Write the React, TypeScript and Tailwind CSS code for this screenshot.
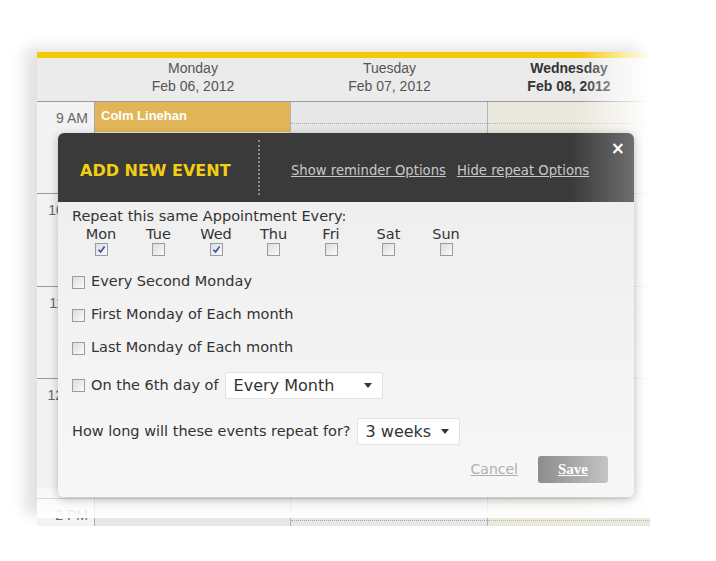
import React from "react";

const days = [
  { label: "Mon", checked: true },
  { label: "Tue", checked: false },
  { label: "Wed", checked: true },
  { label: "Thu", checked: false },
  { label: "Fri", checked: false },
  { label: "Sat", checked: false },
  { label: "Sun", checked: false },
];

const options = [
  "Every Second Monday",
  "First Monday of Each month",
  "Last Monday of Each month",
];

function Box({ checked = false }: { checked?: boolean }) {
  return (
    <div className="w-[13px] h-[13px] border border-[#9c9c9c] bg-gradient-to-br from-[#dcdcdc] to-[#fbfbfb] flex items-center justify-center shrink-0">
      {checked && (
        <svg width="9" height="9" viewBox="0 0 9 9">
          <path d="M1.5 4.8 L3.6 7 L7.6 1.6" stroke="#2f4fa8" strokeWidth="1.6" fill="none" />
        </svg>
      )}
    </div>
  );
}

function Select({ value, width }: { value: string; width: string }) {
  return (
    <div className={`${width} h-[27px] bg-white rounded-[2px] border border-[#e3e3e3] flex items-center justify-between pl-[8px] pr-[10px] shrink-0`}>
      <span className="text-[16px] text-[#333]">{value}</span>
      <svg width="8" height="5" viewBox="0 0 8 5">
        <path d="M0 0 H8 L4 5 Z" fill="#333" />
      </svg>
    </div>
  );
}

function Row({ label, h, children }: { label: string; h: string; children?: React.ReactNode }) {
  return (
    <div className={`grid grid-cols-[58px_196px_197px_162px] ${h} border-t border-[#9a9a9a]`}>
      <div className="bg-[#f3f3f3] border-r border-[#a8a8a8] text-right pr-[6px] pt-[6px] text-[14px] text-[#666]">{label}</div>
      <div className="bg-[#e7e7e7] border-r border-[#b5b5b5] relative">{children}</div>
      <div className="bg-[#e7e7e7] border-r border-[#b5b5b5]">
        <div className="h-[22px] border-b border-dotted border-[#a8a8a8]" />
      </div>
      <div className="bg-[#ebe8dd]">
        <div className="h-[22px] border-b border-dotted border-[#b8b8b8]" />
      </div>
    </div>
  );
}

export default function App() {
  return (
    <div className="w-[716px] h-[561px] bg-white relative overflow-hidden font-['Liberation_Sans',sans-serif]">
      {/* calendar */}
      <div className="absolute left-[37px] top-[52px] w-[613px] shadow-[-12px_-4px_14px_rgba(0,0,0,0.12)]">
        <div className="h-[6px] bg-[#f4c906]" />
        <div className="grid grid-cols-[58px_196px_197px_162px] h-[43px] pb-[6px] bg-[#ebebeb] text-[14px] leading-[18px] text-[#555]">
          <div />
          <div className="flex flex-col items-center justify-center">
            <span>Monday</span>
            <span>Feb 06, 2012</span>
          </div>
          <div className="flex flex-col items-center justify-center">
            <span>Tuesday</span>
            <span>Feb 07, 2012</span>
          </div>
          <div className="flex flex-col items-center justify-center font-bold text-[#333]">
            <span>Wednesday</span>
            <span>Feb 08, 2012</span>
          </div>
        </div>
        <Row label="9 AM" h="h-[92px]">
          <div className="absolute left-0 top-0 w-full h-[30px] bg-[#e2b658] text-white font-bold text-[13px] pl-[6px] pt-[4px]">
            Colm Linehan
          </div>
        </Row>
        <Row label="10 AM" h="h-[93px]" />
        <Row label="11 AM" h="h-[92px]" />
        <Row label="12 PM" h="h-[120px]" />
        <Row label="2 PM" h="h-[20px]" />
        <div className="absolute right-0 top-0 w-[70px] h-full bg-gradient-to-r from-transparent to-white" />
        <div className="absolute left-0 bottom-0 w-full h-[30px] bg-gradient-to-b from-white/40 to-white" />
      </div>

      {/* modal */}
      <div className="absolute left-[58px] top-[133px] w-[576px] h-[364px] rounded-[6px] shadow-[0_2px_10px_rgba(0,0,0,0.25)] flex flex-col font-['DejaVu_Sans',sans-serif] overflow-hidden">
        <div className="h-[69px] bg-[linear-gradient(to_right,#3a3a3a_0%,#3a3a3a_89%,#6e6e6e_100%)] flex items-center relative pt-[6px]">
          <div className="w-[200px] pl-[22px] text-[16px] font-bold text-[#f3cf10]">ADD NEW EVENT</div>
          <div className="h-[55px] mt-[-6px] border-l-2 border-dotted border-[#8a8a8a]" />
          <div className="flex gap-[11px] pl-[31px] text-[13.2px] text-[#c8c8c8] underline">
            <span>Show reminder Options</span>
            <span>Hide repeat Options</span>
          </div>
          <span className="absolute right-[9px] top-[3px] text-white font-bold text-[17px]">×</span>
        </div>
        <div className="flex-1 bg-gradient-to-b from-[#efefef] to-[#f7f7f7] pl-[14px] pt-[5px] text-[14.5px] text-[#333]">
          <div className="leading-[18px] whitespace-nowrap">Repeat this same Appointment Every:</div>
          <div className="flex pl-[14px]">
            {days.map((d) => (
              <div key={d.label} className="w-[57.5px] flex flex-col items-start">
                <div className="w-[30px] flex flex-col items-center">
                  <span className="leading-[18px]">{d.label}</span>
                  <Box checked={d.checked} />
                </div>
              </div>
            ))}
          </div>
          <div className="flex flex-col gap-[19px] mt-[19px]">
            {options.map((o) => (
              <div key={o} className="flex items-center gap-[6px] h-[14px]">
                <Box />
                <span>{o}</span>
              </div>
            ))}
          </div>
          <div className="flex items-center gap-[6px] mt-[17px]">
            <Box />
            <span>On the 6th day of</span>
            <Select value="Every Month" width="w-[158px]" />
          </div>
          <div className="flex items-center gap-[6px] mt-[19px]">
            <span>How long will these events repeat for?</span>
            <Select value="3 weeks" width="w-[103px]" />
          </div>
          <div className="flex items-center justify-end gap-[20px] pr-[26px] mt-[11px]">
            <span className="text-[14px] text-[#b0b0b0] underline">Cancel</span>
            <div className="w-[70px] h-[27px] rounded-[3px] bg-gradient-to-r from-[#8c8c8c] to-[#c4c4c4] flex items-center justify-center font-['Liberation_Serif',serif] font-bold text-white text-[15px] underline">
              Save
            </div>
          </div>
        </div>
      </div>
    </div>
  );
}
